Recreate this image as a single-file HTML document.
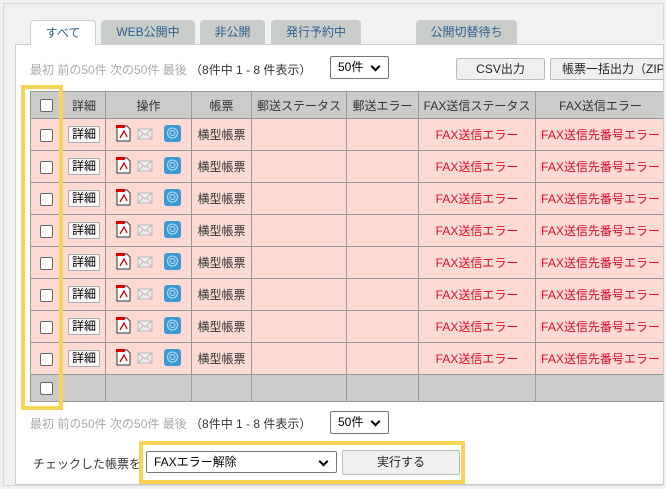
<!DOCTYPE html>
<html><head><meta charset="utf-8"><style>
*{box-sizing:border-box;margin:0;padding:0}
body{width:666px;height:489px;overflow:hidden;background:#f0f1f0;font-family:"Liberation Sans","Noto Sans CJK JP",sans-serif;font-size:12px;color:#333;position:relative}
.a{position:absolute}
.outer{left:3px;top:3px;width:661px;height:483px;border:1px solid #d8d8d8;background:#f0f1f0}
.panel{left:15px;top:44px;width:648px;height:441px;background:#fff;border-left:1px solid #ccc;border-top:1px solid #ccc;border-bottom:1px solid #ccc}
.tab{top:20px;height:24px;background:#c9cdc9;border-radius:4px 4px 0 0;color:#2f5f8f;font-size:12px;text-align:center;line-height:24px}
.tab.on{background:#fff;border:1px solid #ccc;border-bottom:none;height:25px;z-index:2}
.pg{font-size:12px;color:#aaa;white-space:nowrap}
.pg span{color:#333}
.sel{background:#fff;border:1px solid #767676;border-radius:2px;font-size:12px;color:#000;padding-left:7px;line-height:20px}
.sel:after{content:"";position:absolute;right:9px;top:6px;width:5px;height:5px;border-right:2px solid #000;border-bottom:2px solid #000;transform:rotate(45deg)}
.btn{background:#f0f0f0;border:1px solid #bbb;border-radius:2px;text-align:center;font-size:12px;color:#222;line-height:20px;white-space:nowrap;overflow:hidden}
table{position:absolute;left:30px;top:91px;border-collapse:collapse;table-layout:fixed}
td,th{border:1px solid #999;height:32px;text-align:center;font-weight:normal;font-size:12px;white-space:nowrap;overflow:hidden;padding:0}
th{background:#c9ccc8;height:27px;color:#333}
tr.r td{background:#fddad3}
tr.g td{background:#c9ccc8;height:27px}
.red{color:#d6102a}
.cb{display:inline-block;width:13px;height:13px;border:1px solid #666;border-radius:2px;background:#fff;vertical-align:middle}
.db{display:inline-block;border:1px solid #aaa;border-radius:2px;background:#f7f7f7;padding:0 3px;line-height:15px;color:#000}
.yl{border:4px solid #f7d358}
</style></head><body>
<div class="a outer"></div>
<div class="a panel"></div>
<div class="a tab on" style="left:30px;width:66px">すべて</div>
<div class="a tab" style="left:101px;width:94px">WEB公開中</div>
<div class="a tab" style="left:200px;width:65px">非公開</div>
<div class="a tab" style="left:271px;width:90px">発行予約中</div>
<div class="a tab" style="left:416px;width:101px">公開切替待ち</div>

<div class="a pg" style="left:30px;top:61px">最初 前の50件 次の50件 最後 <span>（8件中 1 - 8 件表示）</span></div>
<div class="a sel" style="left:330px;top:56px;width:59px;height:23px">50件</div>
<div class="a btn" style="left:456px;top:58px;width:89px;height:22px">CSV出力</div>
<div class="a btn" style="left:550px;top:58px;width:120px;height:22px;text-align:left;padding-left:11px">帳票一括出力（ZIP）</div>

<table>
<colgroup><col style="width:32px"><col style="width:43px"><col style="width:86px"><col style="width:60px"><col style="width:95px"><col style="width:72px"><col style="width:117px"><col style="width:130px"></colgroup>
<tr><th><span class="cb"></span></th><th>詳細</th><th>操作</th><th>帳票</th><th>郵送ステータス</th><th>郵送エラー</th><th>FAX送信ステータス</th><th>FAX送信エラー</th></tr>
<tr class="r"><td><span class="cb"></span></td><td><span class="db">詳細</span></td><td><svg width="70" height="18" viewBox="0 0 70 18"><path d="M3 2h10l3 3v12H3z" fill="#fff" stroke="#333"/><path d="M2 1h9v3H2z" fill="#d00"/><path d="M6 14l4-7 3 6" fill="none" stroke="#d00" stroke-width="1.3"/><rect x="24" y="5" width="14" height="10" fill="#f3ecec" stroke="#bbb"/><path d="M24 5l7 6 7-6M24 15l5-5M38 15l-5-5" fill="none" stroke="#bbb"/><rect x="50" y="1" width="17" height="17" rx="3" fill="#3a9ad3"/><circle cx="58.5" cy="9" r="5" fill="none" stroke="#bde" stroke-width="1"/><circle cx="58.5" cy="9" r="2.5" fill="none" stroke="#bde"/></svg></td><td>横型帳票</td><td></td><td></td><td class="red">FAX送信エラー</td><td class="red">FAX送信先番号エラー</td></tr>
<tr class="r"><td><span class="cb"></span></td><td><span class="db">詳細</span></td><td><svg width="70" height="18" viewBox="0 0 70 18"><path d="M3 2h10l3 3v12H3z" fill="#fff" stroke="#333"/><path d="M2 1h9v3H2z" fill="#d00"/><path d="M6 14l4-7 3 6" fill="none" stroke="#d00" stroke-width="1.3"/><rect x="24" y="5" width="14" height="10" fill="#f3ecec" stroke="#bbb"/><path d="M24 5l7 6 7-6M24 15l5-5M38 15l-5-5" fill="none" stroke="#bbb"/><rect x="50" y="1" width="17" height="17" rx="3" fill="#3a9ad3"/><circle cx="58.5" cy="9" r="5" fill="none" stroke="#bde" stroke-width="1"/><circle cx="58.5" cy="9" r="2.5" fill="none" stroke="#bde"/></svg></td><td>横型帳票</td><td></td><td></td><td class="red">FAX送信エラー</td><td class="red">FAX送信先番号エラー</td></tr>
<tr class="r"><td><span class="cb"></span></td><td><span class="db">詳細</span></td><td><svg width="70" height="18" viewBox="0 0 70 18"><path d="M3 2h10l3 3v12H3z" fill="#fff" stroke="#333"/><path d="M2 1h9v3H2z" fill="#d00"/><path d="M6 14l4-7 3 6" fill="none" stroke="#d00" stroke-width="1.3"/><rect x="24" y="5" width="14" height="10" fill="#f3ecec" stroke="#bbb"/><path d="M24 5l7 6 7-6M24 15l5-5M38 15l-5-5" fill="none" stroke="#bbb"/><rect x="50" y="1" width="17" height="17" rx="3" fill="#3a9ad3"/><circle cx="58.5" cy="9" r="5" fill="none" stroke="#bde" stroke-width="1"/><circle cx="58.5" cy="9" r="2.5" fill="none" stroke="#bde"/></svg></td><td>横型帳票</td><td></td><td></td><td class="red">FAX送信エラー</td><td class="red">FAX送信先番号エラー</td></tr>
<tr class="r"><td><span class="cb"></span></td><td><span class="db">詳細</span></td><td><svg width="70" height="18" viewBox="0 0 70 18"><path d="M3 2h10l3 3v12H3z" fill="#fff" stroke="#333"/><path d="M2 1h9v3H2z" fill="#d00"/><path d="M6 14l4-7 3 6" fill="none" stroke="#d00" stroke-width="1.3"/><rect x="24" y="5" width="14" height="10" fill="#f3ecec" stroke="#bbb"/><path d="M24 5l7 6 7-6M24 15l5-5M38 15l-5-5" fill="none" stroke="#bbb"/><rect x="50" y="1" width="17" height="17" rx="3" fill="#3a9ad3"/><circle cx="58.5" cy="9" r="5" fill="none" stroke="#bde" stroke-width="1"/><circle cx="58.5" cy="9" r="2.5" fill="none" stroke="#bde"/></svg></td><td>横型帳票</td><td></td><td></td><td class="red">FAX送信エラー</td><td class="red">FAX送信先番号エラー</td></tr>
<tr class="r"><td><span class="cb"></span></td><td><span class="db">詳細</span></td><td><svg width="70" height="18" viewBox="0 0 70 18"><path d="M3 2h10l3 3v12H3z" fill="#fff" stroke="#333"/><path d="M2 1h9v3H2z" fill="#d00"/><path d="M6 14l4-7 3 6" fill="none" stroke="#d00" stroke-width="1.3"/><rect x="24" y="5" width="14" height="10" fill="#f3ecec" stroke="#bbb"/><path d="M24 5l7 6 7-6M24 15l5-5M38 15l-5-5" fill="none" stroke="#bbb"/><rect x="50" y="1" width="17" height="17" rx="3" fill="#3a9ad3"/><circle cx="58.5" cy="9" r="5" fill="none" stroke="#bde" stroke-width="1"/><circle cx="58.5" cy="9" r="2.5" fill="none" stroke="#bde"/></svg></td><td>横型帳票</td><td></td><td></td><td class="red">FAX送信エラー</td><td class="red">FAX送信先番号エラー</td></tr>
<tr class="r"><td><span class="cb"></span></td><td><span class="db">詳細</span></td><td><svg width="70" height="18" viewBox="0 0 70 18"><path d="M3 2h10l3 3v12H3z" fill="#fff" stroke="#333"/><path d="M2 1h9v3H2z" fill="#d00"/><path d="M6 14l4-7 3 6" fill="none" stroke="#d00" stroke-width="1.3"/><rect x="24" y="5" width="14" height="10" fill="#f3ecec" stroke="#bbb"/><path d="M24 5l7 6 7-6M24 15l5-5M38 15l-5-5" fill="none" stroke="#bbb"/><rect x="50" y="1" width="17" height="17" rx="3" fill="#3a9ad3"/><circle cx="58.5" cy="9" r="5" fill="none" stroke="#bde" stroke-width="1"/><circle cx="58.5" cy="9" r="2.5" fill="none" stroke="#bde"/></svg></td><td>横型帳票</td><td></td><td></td><td class="red">FAX送信エラー</td><td class="red">FAX送信先番号エラー</td></tr>
<tr class="r"><td><span class="cb"></span></td><td><span class="db">詳細</span></td><td><svg width="70" height="18" viewBox="0 0 70 18"><path d="M3 2h10l3 3v12H3z" fill="#fff" stroke="#333"/><path d="M2 1h9v3H2z" fill="#d00"/><path d="M6 14l4-7 3 6" fill="none" stroke="#d00" stroke-width="1.3"/><rect x="24" y="5" width="14" height="10" fill="#f3ecec" stroke="#bbb"/><path d="M24 5l7 6 7-6M24 15l5-5M38 15l-5-5" fill="none" stroke="#bbb"/><rect x="50" y="1" width="17" height="17" rx="3" fill="#3a9ad3"/><circle cx="58.5" cy="9" r="5" fill="none" stroke="#bde" stroke-width="1"/><circle cx="58.5" cy="9" r="2.5" fill="none" stroke="#bde"/></svg></td><td>横型帳票</td><td></td><td></td><td class="red">FAX送信エラー</td><td class="red">FAX送信先番号エラー</td></tr>
<tr class="r"><td><span class="cb"></span></td><td><span class="db">詳細</span></td><td><svg width="70" height="18" viewBox="0 0 70 18"><path d="M3 2h10l3 3v12H3z" fill="#fff" stroke="#333"/><path d="M2 1h9v3H2z" fill="#d00"/><path d="M6 14l4-7 3 6" fill="none" stroke="#d00" stroke-width="1.3"/><rect x="24" y="5" width="14" height="10" fill="#f3ecec" stroke="#bbb"/><path d="M24 5l7 6 7-6M24 15l5-5M38 15l-5-5" fill="none" stroke="#bbb"/><rect x="50" y="1" width="17" height="17" rx="3" fill="#3a9ad3"/><circle cx="58.5" cy="9" r="5" fill="none" stroke="#bde" stroke-width="1"/><circle cx="58.5" cy="9" r="2.5" fill="none" stroke="#bde"/></svg></td><td>横型帳票</td><td></td><td></td><td class="red">FAX送信エラー</td><td class="red">FAX送信先番号エラー</td></tr>
<tr class="g"><td><span class="cb"></span></td><td></td><td></td><td></td><td></td><td></td><td></td><td></td></tr>
</table>
<div class="a" style="left:663px;top:40px;width:3px;height:449px;background:#f0f1f0"></div>
<div class="a" style="left:663px;top:44px;width:1px;height:441px;background:#ccc"></div>
<div class="a yl" style="left:21px;top:85px;width:42px;height:325px"></div>

<div class="a pg" style="left:30px;top:415px">最初 前の50件 次の50件 最後 <span>（8件中 1 - 8 件表示）</span></div>
<div class="a sel" style="left:330px;top:411px;width:59px;height:23px">50件</div>
<div class="a" style="left:33px;top:455px;font-size:12px;color:#333">チェックした帳票を</div>
<div class="a yl" style="left:139px;top:441px;width:326px;height:43px"></div>
<div class="a sel" style="left:146px;top:451px;width:191px;height:22px">FAXエラー解除</div>
<div class="a btn" style="left:342px;top:450px;width:118px;height:25px;line-height:23px">実行する</div>
</body></html>
